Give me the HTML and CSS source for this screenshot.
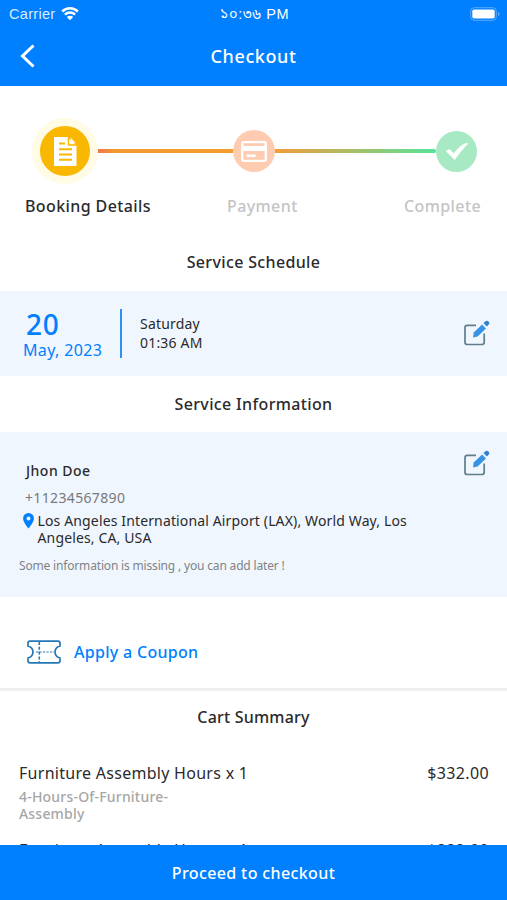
FILE: index.html
```
<!DOCTYPE html>
<html lang="en">
<head>
    <meta charset="UTF-8">
    <meta name="viewport" content="width=device-width, initial-scale=1.0">
    <title>Checkout</title>
    <link rel="stylesheet" href="styles.css">
</head>
<body>

    <div class="screen">
        <header class="header">
            <div class="status-bar">
                <div class="carrier">
                    <span>Carrier</span>
                    <svg width="18" height="14" viewBox="0 0 18 14">
                        <path d="M1.2 4.500a11 11 0 0 1 15.6 0" fill="none" stroke="#fff" stroke-width="2.5"/>
                        <path d="M3.9 7.600a7.2 7.2 0 0 1 10.2 0" fill="none" stroke="#fff" stroke-width="2.3"/>
                        <path d="M9 13.300L5.8 10a4.6 4.6 0 0 1 6.4 0z" fill="#fff"/>
                    </svg>
                </div>
                <div class="clock">১০:৩৬ PM</div>
                <svg class="battery" width="30" height="14" viewBox="0 0 30 14">
                    <rect x="0.7" y="0.7" width="25.6" height="12.6" rx="3.6" fill="none" stroke="#fff" stroke-opacity="0.35"/>
                    <rect x="2.3" y="2.5" width="22.4" height="9" rx="1.8" fill="#fff"/>
                    <path d="M28 5c2 .8 2 3.200 0 4z" fill="#fff" fill-opacity="0.4"/>
                </svg>
            </div>
            <div class="title-bar">
                <svg class="back" width="16" height="26" viewBox="0 0 16 26">
                    <path d="M13.500 1.500L2.500 12l11 10.500" fill="none" stroke="#fff" stroke-width="3"/>
                </svg>
                <h1>Checkout</h1>
            </div>
        </header>

        <main class="content">
            <div class="steps">
                <div class="step step-active">
                    <svg width="24" height="30" viewBox="0 0 24 30">
                        <path d="M1 1h13.500L23.500 10V30H1z" fill="#fff"/>
                        <path d="M15.500 1v8h8" fill="none" stroke="#fab700" stroke-width="1.400"/>
                        <path d="M17.500 1.500c0 4 2 5.500 5.500 6z" fill="#fff"/>
                        <path d="M6 7.500h6M6 13.300h13M6 18.500h13M6 23.700h13" stroke="#fab700" stroke-width="2"/>
                    </svg>
                </div>
                <div class="line line-first"></div>
                <div class="step step-payment">
                    <svg width="26" height="21" viewBox="0 0 26 21">
                        <rect x="1.200" y="1.200" width="23.600" height="18.600" rx="1.500" fill="none" stroke="#fff" stroke-width="2.300"/>
                        <path d="M1 4.500h24v5.500H1z" fill="#fff"/>
                        <path d="M3 4h20" stroke="#ffcbb1" stroke-width="2"/>
                        <path d="M5.500 14.800h9" stroke="#fff" stroke-width="2.600"/>
                    </svg>
                </div>
                <div class="line line-second"></div>
                <div class="step step-complete">
                    <svg width="24" height="17" viewBox="0 0 24 17">
                        <path d="M1 8L4.500 6.500 9 10.500C12 6 16 2.500 20.500.5H23C18 5.500 13.500 11 9.700 16.700z" fill="#fff" stroke="#fff" stroke-width=".6"/>
                    </svg>
                </div>
            </div>
            <div class="step-labels">
                <span class="label-active">Booking Details</span>
                <span class="label-payment">Payment</span>
                <span class="label-complete">Complete</span>
            </div>

            <h2 class="schedule-title">Service Schedule</h2>
            <section class="schedule">
                <div class="date">
                    <div class="day">20</div>
                    <div class="month">May, 2023</div>
                </div>
                <div class="time">
                    <div class="weekday">Saturday</div>
                    <div class="hour">01:36 AM</div>
                </div>
                <svg class="edit" width="27" height="27" viewBox="0 0 27 27">
                    <path d="M13 5.300H4.300a2.300 2.300 0 0 0-2.300 2.300v14.600a2.300 2.300 0 0 0 2.300 2.300h14.600a2.300 2.300 0 0 0 2.300-2.300V13.500" fill="none" stroke="#607d8b" stroke-width="1.700"/>
                    <path d="M10 17.500l.7-4.900 8.400-8.100 3.900 3.900-8.400 8.100z" fill="#3794e4"/>
                    <path d="M20.500 3.100l1.700-1.600a2.300 2.300 0 0 1 3.300 3.300l-1.600 1.700z" fill="#3181ce"/>
                </svg>
            </section>

            <h2 class="info-title">Service Information</h2>
            <section class="info">
                <div class="info-text">
                    <div class="name">Jhon Doe</div>
                    <div class="phone">+11234567890</div>
                    <div class="address">
                        <svg width="11" height="16" viewBox="0 0 11 16">
                            <path d="M5.500 0A5.400 5.400 0 0 0 .1 5.500C.1 9.300 5.500 15.500 5.500 15.500s5.400-6.200 5.400-10A5.400 5.400 0 0 0 5.500 0zm0 3.400a2 2 0 1 1 0 4 2 2 0 0 1 0-4z" fill="#007fff"/>
                        </svg>
                        <p>Los Angeles International Airport (LAX), World Way, Los<br>Angeles, CA, USA</p>
                    </div>
                    <div class="missing">Some information is missing , you can add later !</div>
                </div>
                <svg class="edit" width="27" height="27" viewBox="0 0 27 27">
                    <path d="M13 5.300H4.300a2.300 2.300 0 0 0-2.300 2.300v14.600a2.300 2.300 0 0 0 2.300 2.300h14.600a2.300 2.300 0 0 0 2.300-2.300V13.500" fill="none" stroke="#607d8b" stroke-width="1.700"/>
                    <path d="M10 17.500l.7-4.900 8.400-8.100 3.900 3.900-8.400 8.100z" fill="#3794e4"/>
                    <path d="M20.500 3.100l1.700-1.600a2.300 2.300 0 0 1 3.300 3.300l-1.600 1.700z" fill="#3181ce"/>
                </svg>
            </section>

            <div class="coupon">
                <svg width="34" height="24" viewBox="0 0 34 24" fill="none" stroke="#2478b5">
                    <path d="M3 1.200h28c1.500 0 2 1 2 2V6c-3.500 1-5 3-5 6s1.500 5 5 6v2.800c0 1.200-.5 2-2 2H3c-1.500 0-2-.8-2-2V18c3.500-1 5-3 5-6S4.500 7 1 6V3.200c0-1 .5-2 2-2z" stroke-width="1.700"/>
                    <path d="M12.300 2v20" stroke-width="1.600" stroke-dasharray="3 1.800"/>
                    <path d="M9 12h18" stroke-width="1.200" stroke-dasharray="2.200 1.300"/>
                </svg>
                <span>Apply a Coupon</span>
            </div>

            <h2 class="cart-title">Cart Summary</h2>
            <div class="cart-item">
                <div>
                    <div class="item-name">Furniture Assembly Hours x 1</div>
                    <div class="item-type">4-Hours-Of-Furniture-<br>Assembly</div>
                </div>
                <div class="price">$332.00</div>
            </div>
            <div class="cart-item">
                <div class="item-name">Furniture Assembly Hours x 1</div>
                <div class="price">$332.00</div>
            </div>
        </main>

        <button class="btn-checkout">Proceed to checkout</button>
    </div>

</body>
</html>
```
FILE: styles.css
```
* {
    box-sizing: border-box;
}
body {
    margin: 0;
    font-family: "Noto Sans", "Open Sans", sans-serif;
    background-color: #fff;
    color: #2a2a2d;
}
svg {
    display: block;
    flex-shrink: 0;
}
.screen {
    display: flex;
    flex-direction: column;
    height: 900px;
    overflow: hidden;
}
.header {
    height: 86px;
    flex-shrink: 0;
    background-color: #007fff;
    color: #fff;
}
.status-bar {
    display: grid;
    grid-template-columns: 1fr auto 1fr;
    align-items: center;
    height: 27px;
    padding: 0 7px 0 9px;
    font-family: "Liberation Sans", "Noto Sans Bengali", sans-serif;
    font-size: 14.5px;
}
.carrier {
    display: flex;
    gap: 6px;
    align-items: center;
    letter-spacing: 0.3px;
    color: #d8ebff;
}
.clock {
    padding-top: 3px;
    letter-spacing: 0.7px;
}
.battery {
    justify-self: end;
}
.title-bar {
    display: flex;
    align-items: center;
    height: 59px;
    padding-left: 20px;
}
h1 {
    flex: 1;
    margin: -2px 36px 0 0;
    text-align: center;
    font-size: 18px;
    font-weight: 500;
    letter-spacing: 0.6px;
}
.content {
    flex: 1;
    min-height: 0;
    overflow: hidden;
}
.steps {
    display: flex;
    align-items: center;
    height: 66px;
    margin-top: 32px;
    padding-left: 32px;
}
.step {
    display: flex;
    align-items: center;
    justify-content: center;
    flex-shrink: 0;
    border-radius: 50%;
}
.step-active {
    width: 66px;
    height: 66px;
    border: 8px solid #fffbe5;
    background-color: #fab700;
}
.step-payment {
    width: 42px;
    height: 42px;
    background-color: #ffcbb1;
}
.step-complete {
    width: 41px;
    height: 41px;
    background-color: #a6e9c2;
}
.line {
    height: 4px;
}
.line-first {
    width: 135px;
    background: linear-gradient(to right, #ee7645, #f29a30 12%, #f59e30);
}
.line-second {
    width: 161px;
    background: linear-gradient(to right, #f39c38, #55e39a);
    border-radius: 0 2px 2px 0;
}
.step-labels {
    display: flex;
    height: 24px;
    margin-top: 10px;
    padding-left: 25px;
    line-height: 24px;
    font-size: 16px;
    font-weight: 500;
    letter-spacing: 0.4px;
    color: #c4c4c4;
}
.label-active {
    width: 202px;
    color: #2a2a2d;
}
.label-payment {
    width: 177px;
}
h2 {
    margin: 0;
    text-align: center;
    line-height: 24px;
    font-size: 16px;
    font-weight: 500;
    letter-spacing: 0.35px;
}
.schedule-title {
    margin-top: 32px;
}
.schedule {
    display: flex;
    align-items: center;
    height: 85px;
    margin-top: 17px;
    padding: 0 17px 0 23px;
    background-color: #f0f6fd;
}
.date {
    width: 99px;
    height: 49px;
    border-right: 2px solid #2c91f5;
    color: #007fff;
}
.day {
    padding-left: 3px;
    line-height: 30px;
    font-size: 28px;
    font-weight: 500;
    letter-spacing: 0.8px;
}
.month {
    line-height: 22px;
    font-size: 16px;
    letter-spacing: 0.35px;
}
.time {
    padding: 0 0 1px 18px;
    line-height: 19.5px;
    font-size: 14px;
    letter-spacing: 0.2px;
}
.edit {
    margin-left: auto;
}
.info-title {
    margin-top: 16px;
}
.info {
    display: flex;
    align-items: flex-start;
    height: 165px;
    margin-top: 16px;
    padding: 18px 17px 0 19px;
    background-color: #f0f6fd;
}
.info-text {
    padding-top: 10px;
}
.name {
    padding-left: 7px;
    line-height: 22px;
    font-size: 14px;
    font-weight: 500;
    letter-spacing: 0.5px;
}
.phone {
    margin-top: 6px;
    padding-left: 6px;
    line-height: 20px;
    font-size: 14px;
    letter-spacing: 0.35px;
    color: #77797c;
}
.address {
    display: flex;
    gap: 3.5px;
    margin-top: 4px;
    padding-left: 4px;
    line-height: 17px;
    font-size: 14px;
    letter-spacing: 0.14px;
    white-space: nowrap;
}
.address svg {
    margin-top: 1px;
}
.address p {
    margin: 0;
}
.missing {
    margin-top: 11px;
    line-height: 18px;
    font-size: 12px;
    letter-spacing: -0.17px;
    color: #808387;
}
.coupon {
    display: flex;
    align-items: center;
    gap: 13px;
    height: 94px;
    padding: 19px 0 0 27px;
    border-bottom: 3px solid #efefef;
    font-size: 16px;
    font-weight: 500;
    letter-spacing: 0.3px;
    color: #007fff;
}
.cart-title {
    margin-top: 14px;
    letter-spacing: 0.2px;
}
.cart-item {
    display: flex;
    justify-content: space-between;
    height: 77px;
    padding: 0 18px 0 19px;
    font-size: 16px;
    letter-spacing: 0.28px;
}
.cart-title + .cart-item {
    margin-top: 32px;
}
.item-name,
.price {
    line-height: 24px;
}
.price {
    letter-spacing: 0.35px;
}
.item-type {
    margin-top: 3px;
    line-height: 17px;
    font-size: 14px;
    font-weight: 500;
    letter-spacing: 0.2px;
    color: #a6a6a6;
}
.btn-checkout {
    height: 55px;
    flex-shrink: 0;
    padding: 0;
    border: none;
    background-color: #007fff;
    color: #fff;
    font-family: inherit;
    font-size: 16px;
    font-weight: 500;
    letter-spacing: 0.38px;
}
```
